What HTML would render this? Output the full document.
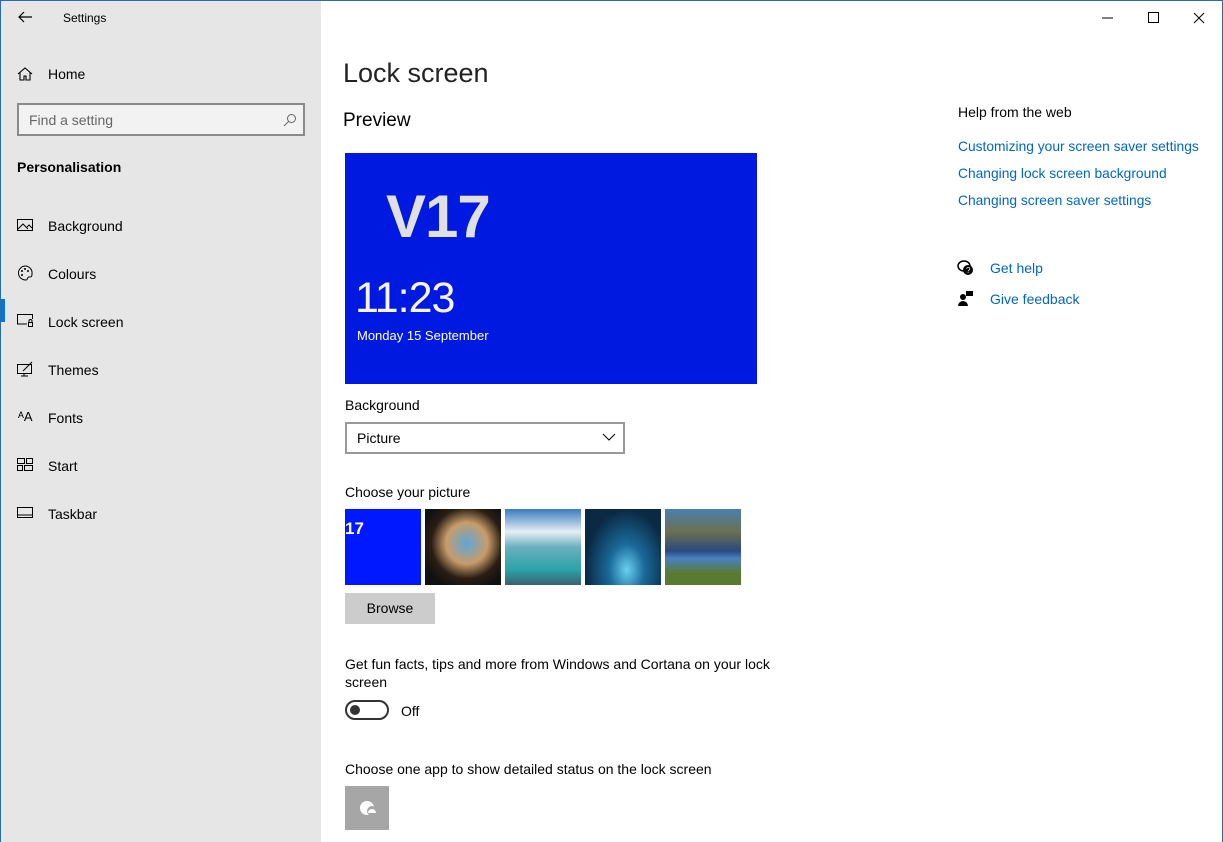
<!DOCTYPE html>
<html><head><meta charset="utf-8"><style>
*{margin:0;padding:0;box-sizing:border-box}
body{width:1223px;height:842px;overflow:hidden;font-family:"Liberation Sans",sans-serif;background:#fff;position:relative;color:#000}
.frame{position:absolute;inset:0;border:1px solid #2b6cb0;border-bottom:none;pointer-events:none;z-index:5}
.side{position:absolute;left:0;top:0;width:321px;height:842px;background:#e6e6e6}
.t{position:absolute;white-space:nowrap}
.nav{position:absolute;left:48px;font-size:14px;color:#000}
.ic{position:absolute;left:17px}
a{color:#0067c0;text-decoration:none}
</style></head><body>
<div class="side">
<svg class="t" style="left:17px;top:10px" width="16" height="14"><path d="M15 7H2M7 2L2 7l5 5" stroke="#000" fill="none" stroke-width="1.2"/></svg>
<div class="t" style="left:63px;top:11px;font-size:12px">Settings</div>
<svg class="ic" style="top:66px" width="16" height="16"><path d="M1 8L8 2l7 6M3 6v8h4v-4h2v4h4V6" stroke="#000" fill="none" stroke-width="1.1"/></svg>
<div class="nav" style="top:66px">Home</div>
<div class="t" style="left:17px;top:103px;width:288px;height:33px;border:2px solid #8a8a8a;background:#f2f2f2"></div>
<div class="t" style="left:29px;top:112px;font-size:14px;color:#666">Find a setting</div>
<svg class="t" style="left:283px;top:113px" width="14" height="14"><circle cx="8.5" cy="5.5" r="4" stroke="#666" fill="none"/><path d="M5.5 8.5L1 13" stroke="#666"/></svg>
<div class="t" style="left:17px;top:159px;font-size:14px;font-weight:bold">Personalisation</div>
<svg class="ic" style="top:218px" width="17" height="15"><rect x=".5" y="1.5" width="15" height="11" stroke="#000" fill="none"/><path d="M1 11l5-5 5 5M10 9l2-2 3 3" stroke="#000" fill="none"/></svg>
<div class="nav" style="top:218px">Background</div>
<svg class="ic" style="top:265px" width="16" height="16"><path d="M8 1a7 7 0 1 0 1 14c2 0 1-3 3-3s3 0 3-3A7 7 0 0 0 8 1z" stroke="#000" fill="none"/><circle cx="5" cy="6" r="1" fill="#000"/><circle cx="8" cy="4" r="1" fill="#000"/><circle cx="11" cy="6" r="1" fill="#000"/><circle cx="5" cy="10" r="1" fill="#000"/></svg>
<div class="nav" style="top:266px">Colours</div>
<div class="t" style="left:0;top:299px;width:5px;height:23px;background:#0078d7"></div>
<svg class="ic" style="top:313px" width="17" height="15"><path d="M10 11H.5V1.5h15V6" stroke="#000" fill="none"/><rect x="11.5" y="9.5" width="4" height="4" stroke="#000" fill="none"/><path d="M12 9.5V8a1.5 1.5 0 0 1 3 0v1.5" stroke="#000" fill="none"/></svg>
<div class="nav" style="top:314px">Lock screen</div>
<svg class="ic" style="top:361px" width="17" height="16"><rect x=".5" y="3.5" width="14" height="9" stroke="#000" fill="none"/><path d="M7 12v3M4 15h7M6 10l9-9" stroke="#000" fill="none"/></svg>
<div class="nav" style="top:362px">Themes</div>
<div class="t" style="left:18px;top:409px;font-size:13px">ᴬA</div>
<div class="nav" style="top:410px">Fonts</div>
<svg class="ic" style="top:458px" width="17" height="14"><rect x=".5" y=".5" width="7" height="5" stroke="#000" fill="none"/><rect x="9.5" y=".5" width="6" height="5" stroke="#000" fill="none"/><rect x=".5" y="7.5" width="5" height="5" stroke="#000" fill="none"/><rect x="7.5" y="7.5" width="8" height="5" stroke="#000" fill="none"/></svg>
<div class="nav" style="top:458px">Start</div>
<svg class="ic" style="top:507px" width="17" height="12"><rect x=".5" y=".5" width="15" height="10" stroke="#000" fill="none"/><path d="M1 8h15" stroke="#000"/></svg>
<div class="nav" style="top:506px">Taskbar</div>
</div>
<svg class="t" style="left:1101px;top:11px" width="110" height="14"><path d="M1 7h11" stroke="#000"/><rect x="47.5" y="1.5" width="10" height="10" stroke="#000" fill="none"/><path d="M93 2l10 10M103 2L93 12" stroke="#000"/></svg>
<div class="t" style="left:343px;top:58px;font-size:27px;color:#222">Lock screen</div>
<div class="t" style="left:343px;top:110px;font-size:19px">Preview</div>
<div class="t" style="left:345px;top:153px;width:412px;height:231px;background:#0019e0;color:#fff">
<div class="t" style="left:41px;top:29px;font-size:60px;font-weight:bold;color:#e0e0e0;letter-spacing:-1px">V17</div>
<div class="t" style="left:10px;top:121px;font-size:43px;color:#f4f4f4;letter-spacing:-1px">11:23</div>
<div class="t" style="left:12px;top:175px;font-size:13px">Monday 15 September</div>
</div>
<div class="t" style="left:345px;top:397px;font-size:14px">Background</div>
<div class="t" style="left:345px;top:422px;width:280px;height:32px;border:2px solid #999;background:#fff"></div>
<div class="t" style="left:357px;top:430px;font-size:14px">Picture</div>
<svg class="t" style="left:602px;top:433px" width="14" height="9"><path d="M1 1l6 6 6-6" stroke="#000" fill="none"/></svg>
<div class="t" style="left:345px;top:484px;font-size:14px">Choose your picture</div>
<div class="t" style="left:345px;top:509px;width:76px;height:76px;background:#0018ff;color:#fff;font-weight:bold;font-size:17px;padding:10px 0 0 0">17</div>
<div class="t" style="left:425px;top:509px;width:76px;height:76px;background:radial-gradient(ellipse at 55% 45%,#5fa6d8 0,#c89c6a 35%,#2a1e14 60%,#111 80%)"></div>
<div class="t" style="left:505px;top:509px;width:76px;height:76px;background:linear-gradient(#3a7bc0,#e6eef5 30%,#6ab0c0 50%,#2aa3a8 80%,#3a6070)"></div>
<div class="t" style="left:585px;top:509px;width:76px;height:76px;background:radial-gradient(ellipse at 55% 80%,#6ad0f0 0,#1a6a9a 30%,#0a2a44 70%)"></div>
<div class="t" style="left:665px;top:509px;width:76px;height:76px;background:linear-gradient(#4a80b0,#6a7050 30%,#2a4a80 55%,#4a80c0 65%,#5a7a30 85%)"></div>
<div class="t" style="left:345px;top:593px;width:90px;height:31px;background:#ccc;font-size:14px;text-align:center;line-height:31px">Browse</div>
<div class="t" style="left:345px;top:655px;font-size:14px;line-height:18px">Get fun facts, tips and more from Windows and Cortana on your lock<br>screen</div>
<div class="t" style="left:345px;top:700px;width:44px;height:20px;border:2px solid #333;border-radius:10px"></div>
<div class="t" style="left:350px;top:705px;width:10px;height:10px;border-radius:50%;background:#333"></div>
<div class="t" style="left:401px;top:703px;font-size:14px">Off</div>
<div class="t" style="left:345px;top:761px;font-size:14px">Choose one app to show detailed status on the lock screen</div>
<div class="t" style="left:345px;top:786px;width:44px;height:44px;background:#a6a6a6"></div>
<svg class="t" style="left:357px;top:797px" width="24" height="22"><circle cx="10" cy="11" r="7" fill="#fff"/><circle cx="15" cy="14" r="5" fill="#a6a6a6"/><path d="M11 16a4 4 0 0 1 8 0z" fill="#fff"/></svg>
<div class="t" style="left:958px;top:104px;font-size:14px">Help from the web</div>
<div class="t" style="left:958px;top:139px;font-size:13.8px"><a>Customizing your screen saver settings</a></div>
<div class="t" style="left:958px;top:166px;font-size:13.8px"><a>Changing lock screen background</a></div>
<div class="t" style="left:958px;top:193px;font-size:13.8px"><a>Changing screen saver settings</a></div>
<svg class="t" style="left:957px;top:259px" width="18" height="18"><ellipse cx="7" cy="7" rx="6" ry="5" stroke="#000" fill="none" stroke-width="1.5"/><circle cx="11" cy="11" r="5" fill="#000"/><text x="9" y="14" font-size="8" fill="#fff" font-family="Liberation Sans">?</text></svg>
<div class="t" style="left:990px;top:260px;font-size:14px"><a>Get help</a></div>
<svg class="t" style="left:958px;top:290px" width="16" height="16"><circle cx="5" cy="7" r="3" fill="#000"/><path d="M0 16a5 5 0 0 1 10 0z" fill="#000"/><rect x="8" y="1" width="7" height="5" fill="#000"/></svg>
<div class="t" style="left:990px;top:291px;font-size:14px"><a>Give feedback</a></div>
<div class="frame"></div>
</body></html>
